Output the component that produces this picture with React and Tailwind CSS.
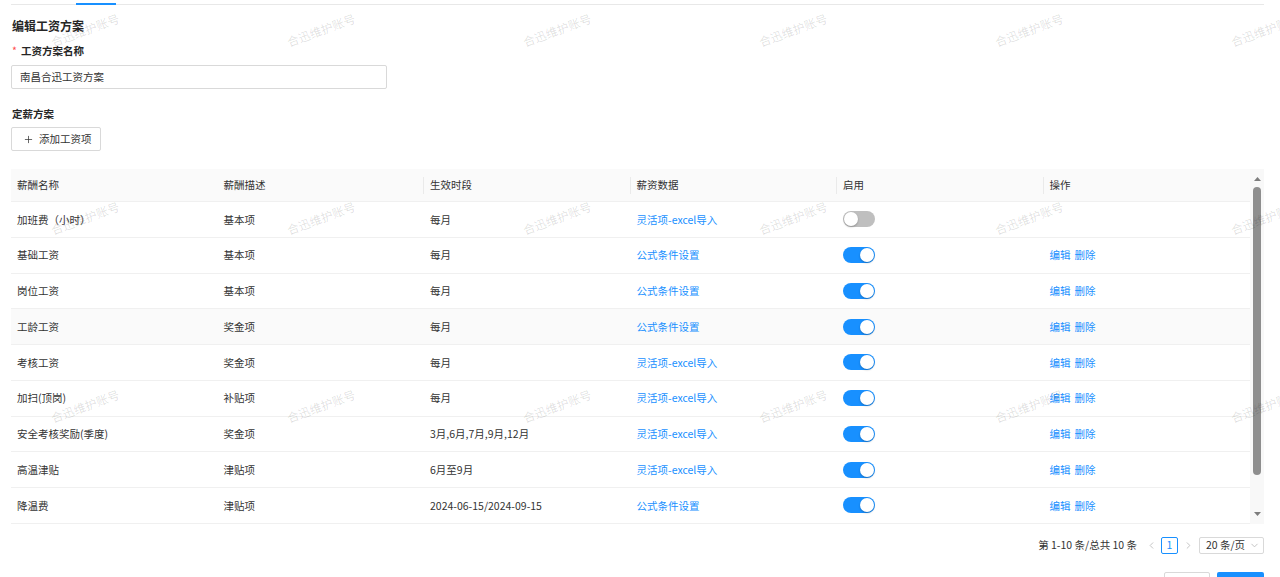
import { Plus, ChevronLeft, ChevronRight, ChevronDown } from 'lucide-react';

const rows = [
  { name: '加班费（小时）', desc: '基本项', period: '每月', data: '灵活项-excel导入', on: false, ops: false },
  { name: '基础工资', desc: '基本项', period: '每月', data: '公式条件设置', on: true, ops: true },
  { name: '岗位工资', desc: '基本项', period: '每月', data: '公式条件设置', on: true, ops: true },
  { name: '工龄工资', desc: '奖金项', period: '每月', data: '公式条件设置', on: true, ops: true, hover: true },
  { name: '考核工资', desc: '奖金项', period: '每月', data: '灵活项-excel导入', on: true, ops: true },
  { name: '加扫(顶岗)', desc: '补贴项', period: '每月', data: '灵活项-excel导入', on: true, ops: true },
  { name: '安全考核奖励(季度)', desc: '奖金项', period: '3月,6月,7月,9月,12月', data: '灵活项-excel导入', on: true, ops: true },
  { name: '高温津贴', desc: '津贴项', period: '6月至9月', data: '灵活项-excel导入', on: true, ops: true },
  { name: '降温费', desc: '津贴项', period: '2024-06-15/2024-09-15', data: '公式条件设置', on: true, ops: true },
  { name: '夜班补贴', desc: '补贴项', period: '每月', data: '灵活项-excel导入', on: true, ops: true }
];

const headers = ['薪酬名称', '薪酬描述', '生效时段', '薪资数据', '启用', '操作'];

const Switch = ({ on }) => (
  <span
    className={`relative inline-block w-[32px] h-[16px] rounded-full ${on ? 'bg-[#1890ff]' : 'bg-[#bfbfbf]'}`}
  >
    <span
      className={`absolute top-[1px] w-[14px] h-[14px] rounded-full bg-white shadow-[0_1px_2px_rgba(0,0,0,0.25)] ${on ? 'right-[1px]' : 'left-[1px]'}`}
    />
  </span>
);

const Watermarks = () => (
  <div className="pointer-events-none absolute left-[-33px] top-[-64px] grid grid-cols-[repeat(6,236px)] auto-rows-[188px]">
    {Array.from({ length: 24 }).map((_, i) => (
      <div key={i} className="flex items-center justify-center">
        <span className="rotate-[-20deg] text-[12px] text-black/[0.13] whitespace-nowrap">合迅维护账号</span>
      </div>
    ))}
  </div>
);

// 表格右侧滚动条
const ScrollBar = () => (
  <div className="w-[14px] h-full flex flex-col items-center bg-[#f8f8f8]">
    <div className="h-[16px] flex items-end justify-center pb-[4px]">
      <svg width="7" height="4" viewBox="0 0 7 4">
        <polygon points="3.5,0 7,4 0,4" fill="#7d7d7d" />
      </svg>
    </div>
    <div className="mt-[2px] w-[8px] h-[288px] rounded-full bg-[#8e8e8e]" />
    <div className="flex-1" />
    <div className="h-[16px] flex items-start justify-center pt-[4px]">
      <svg width="7" height="4" viewBox="0 0 7 4">
        <polygon points="0,0 7,0 3.5,4" fill="#7d7d7d" />
      </svg>
    </div>
  </div>
);

export default function App() {
  return (
    <div className="relative h-[577px] overflow-hidden bg-white pl-[11px] pr-[16px] text-[10.5px] text-[#333] font-['Noto_Sans_CJK_SC',sans-serif]">
      {/* 顶部标签线 */}
      <div className="flex border-b border-[#e8e8e8] h-[5px]">
        <span className="ml-[65px] w-[40px] border-b-2 border-[#1890ff] -mb-px" />
      </div>

      <div className="mt-[11px] leading-[20px] text-[12px] font-bold text-[#262626] pl-px">编辑工资方案</div>

      <div className="mt-[5px] leading-[20px] font-bold text-[#262626] flex items-center pl-px">
        <span className="text-[#ff4d4f] mr-[4px] font-normal">*</span>
        工资方案名称
      </div>
      <div className="mt-[4px] w-[376px] h-[24px] border border-[#d9d9d9] rounded-[2px] flex items-center pl-[8px] text-[#333]">
        南昌合迅工资方案
      </div>

      <div className="mt-[15px] leading-[20px] font-bold text-[#262626] pl-px">定薪方案</div>
      <button className="mt-[3px] w-[90px] h-[24px] border border-[#d9d9d9] rounded-[2px] flex items-center gap-[5px] pl-[11px] text-[#333] bg-white">
        <Plus className="w-[11px] h-[11px]" strokeWidth={1.6} />
        添加工资项
      </button>

      {/* 表格 */}
      <div className="mt-[18px] h-[355px] flex">
        <div className="flex-1 overflow-hidden">
          <div className="grid grid-cols-6 h-[33px] bg-[#fafafa] border-b border-[#f0f0f0]">
            {headers.map((h, i) => (
              <div key={h} className="relative flex items-center px-[6px] text-[#333]">
                {h}
                {i >= 1 && i <= 4 && (
                  <span className="absolute right-0 top-[8px] w-px h-[17px] bg-[#eaeaea]" />
                )}
              </div>
            ))}
          </div>
          {rows.map((r) => (
            <div
              key={r.name}
              className={`grid grid-cols-6 h-[35.75px] border-b border-[#f0f0f0] ${r.hover ? 'bg-[#fafafa]' : ''}`}
            >
              <div className="flex items-center px-[6px]">{r.name}</div>
              <div className="flex items-center px-[6px]">{r.desc}</div>
              <div className="flex items-center px-[6px]">{r.period}</div>
              <div className="flex items-center px-[6px] text-[#1890ff]">{r.data}</div>
              <div className="flex items-center px-[6px]">
                <Switch on={r.on} />
              </div>
              <div className="flex items-center px-[6px] gap-[4px] text-[#1890ff]">
                {r.ops && (
                  <>
                    <span>编辑</span>
                    <span>删除</span>
                  </>
                )}
              </div>
            </div>
          ))}
        </div>
        <ScrollBar />
      </div>

      {/* 分页 */}
      <div className="mt-[12px] flex items-center justify-end h-[18px] whitespace-nowrap">
        <span className="mr-[9px]">第 1-10 条/总共 10 条</span>
        <ChevronLeft className="w-[11px] h-[11px] text-[#bfbfbf]" />
        <span className="ml-[4px] w-[17px] h-[17px] border border-[#1890ff] rounded-[2px] flex items-center justify-center text-[#1890ff]">
          1
        </span>
        <ChevronRight className="ml-[5px] w-[11px] h-[11px] text-[#bfbfbf]" />
        <span className="ml-[5px] w-[65px] h-[17px] border border-[#d9d9d9] rounded-[2px] flex items-center justify-between pl-[6px] pr-[3px]">
          20 条/页
          <ChevronDown className="w-[11px] h-[11px] text-[#bfbfbf]" />
        </span>
      </div>

      {/* 底部按钮 */}
      <div className="mt-[18px] flex justify-end gap-[7px]">
        <button className="w-[46px] h-[24px] border border-[#d9d9d9] rounded-[2px] bg-white">取消</button>
        <button className="w-[47px] h-[24px] rounded-[2px] bg-[#1890ff] text-white">保存</button>
      </div>

      <Watermarks />
    </div>
  );
}
